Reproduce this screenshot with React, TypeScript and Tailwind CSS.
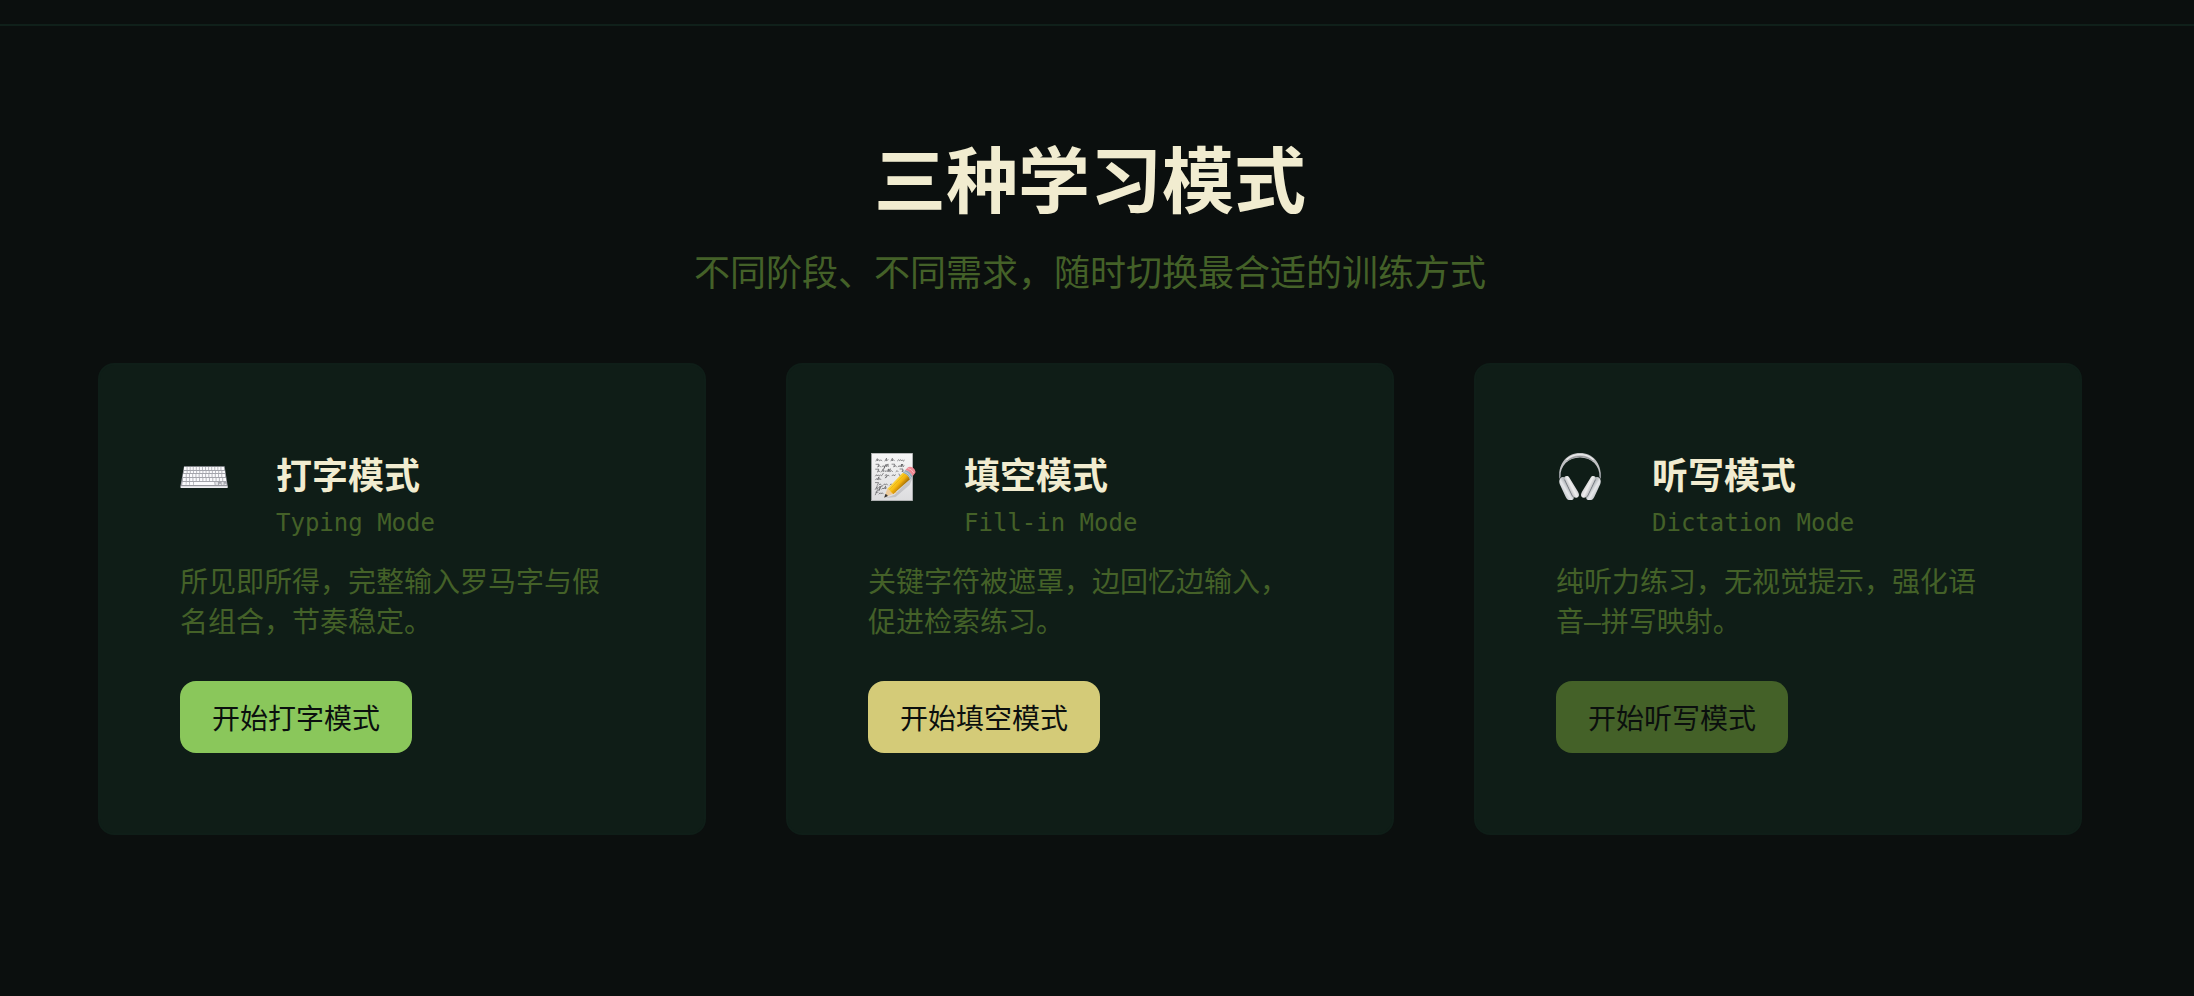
import React from 'react';

const KEY_ROWS = [
  { y: 14, h: 3, x1: 4, x2: 44 },
  { y: 18, h: 2, x1: 4, x2: 45 },
  { y: 21, h: 3, x1: 3, x2: 45 },
  { y: 25, h: 3, x1: 3, x2: 46 },
];

const KeyboardIcon: React.FC = () => (
  <svg className="w-12 h-12" viewBox="0 0 48 48" aria-hidden="true">
    <path d="M4 13.3h40.6l3 18.9v2.2q0 .6-.8.6H1.4q-.8 0-.8-.6v-2.2z" fill="#a4a5ac" />
    {KEY_ROWS.map((row) => (
      <g key={row.y}>
        <rect x={row.x1} y={row.y} width={row.x2 - row.x1} height={row.h} rx="0.5" fill="#fbfbfd" />
        {Array.from({ length: 12 }, (_, i) => {
          const x = row.x1 + ((i + 1) * (row.x2 - row.x1)) / 13;
          return <path key={i} d={`M${x} ${row.y}v${row.h}`} stroke="#a4a5ac" strokeWidth="0.8" />;
        })}
      </g>
    ))}
    <path d="M2.6 29h3.2v3H2.2zM6.5 29h2.7v3H6.2zM10 29h3v3H9.7zM13.8 29h20.5l.4 3H13.6z" fill="#fbfbfd" />
    <path d="M35.2 29h2.7l.2 3h-2.6zM39 30.7h2v1.3h-2zM41.6 29h2v3h-2zM44.3 30.7h2l.2 1.3h-2z" fill="#e2e2e6" />
    <path d="M.7 33.1h46.8v1.3q0 .6-.8.6H1.4q-.7 0-.7-.6z" fill="#ededf0" />
    <path d="M.9 32.7h46.4" stroke="#898a92" strokeWidth="0.7" />
  </svg>
);

const MemoIcon: React.FC = () => (
  <svg className="w-12 h-12" viewBox="0 0 48 48" aria-hidden="true">
    <defs>
      <linearGradient id="paper" x1="0" y1="0" x2="0" y2="1">
        <stop offset="0" stopColor="#f7f7f7" />
        <stop offset="1" stopColor="#dcdcde" />
      </linearGradient>
      <linearGradient id="pencil" gradientUnits="userSpaceOnUse" x1="26" y1="27" x2="34" y2="34">
        <stop offset="0" stopColor="#f9d65b" />
        <stop offset="0.35" stopColor="#fbc91e" />
        <stop offset="0.65" stopColor="#efac0c" />
        <stop offset="1" stopColor="#a97406" />
      </linearGradient>
    </defs>
    <rect x="3.6" y="0.3" width="41" height="47.4" fill="url(#paper)" stroke="#bcbcbe" strokeWidth="0.6" />
    <g fill="none" stroke="#48484c" strokeWidth="0.6" strokeLinecap="round" strokeLinejoin="round">
      <path d="M8 8l1.3-2.4.2 2.3 1.2-1.4.8 1.4 1.4-1 1 .8M17 8l1.5-2.8-.2 2.6 1.8-1M23 7.9l1.4-2.6-.3 2.6 1.2-1.3 1 1.2M29.5 7.8l1.3-1.2.7 1.1 1.2-1 .8 1.2 1.1-1.1.8 1.4 1-1" />
      <path d="M8 11.3h3l-1.3 2.8 1.8-1.5 1 1.3M14 13.8l1.2-1.2.8 1.1 1-1.1-1 3 2.2-4.5.3 2.6 1.5-2.8.2 2.7M24 11.2h2.7l-1 2.8 1.8-1.4.8 1.2M30.2 13.8l1-1.2.8 1.2 1.8-2.8-.5 2.8 1.4-2.7.2 2.7 1.2-1" />
      <path d="M7.6 16.2h3.2l-1.3 2.9 1.5-1.4 1 1.2M13.5 18.8l1.8-3-.3 2.8 1.2-1 .9 1 1.1-1 1 1.1 1.3-2.8.1 2.7 1.7-2.9-.6 3 2-1 .8.8M28 18.6l1.2-1 .8 1M32 16h3l-1 2.8 1.7-1.1" />
      <path d="M7.5 23l1-1.3.8 1.3 1.2-1.2.8 1.2 1.4-1 .8.8 1.8-2.5M17 22.8l1.2-1.4.6 1.3-1.4 2.4 2.8-3.2.8 1M24 22.8l1.2-1.2.8 1.2 1.5-1M31 21l.8 1.8 1.7-1" />
      <path d="M7.6 26.8l1.2-1.3.6 1.2 1.5-2.8-.3 2.8 1.5-1.1.7 1" />
      <path d="M7.4 29.6h3.2l-1.4 2.8M11 32l1.2-1.2.8 1.1M15.6 32l1-1.2.8 1.2 1.2-1.1.8 1M22 32l1.2-1.2.8 1" />
      <path d="M7.3 36.4l1.8-3-.2 2.9 1.4-1.1 2-2.2-1.2 4.6 2-4.3 1.6-.5M13.8 36l1.2-1 .8 1 1.8-2.8-.5 2.7 1.4-1" />
      <path d="M7.3 41.8l2-4.6 1.3-.3M8 39.2h2M11 41l1.2-1.2.7 1 1.4-1 .8 1" />
    </g>
    {/* soft shadow under the pencil */}
    <path d="M17.5 45l9-3.2L44 23.5l.6 1.5-3 7-14 12z" fill="#77777c" opacity="0.28" />
    <path d="M16.2 44.6l3-8.6 3 1.2 2.8 3.8z" fill="#edca99" />
    <path d="M19.2 36l1.8 1 .9 2.2 2.2.2.9 1.6 4-1.5-4.5-5.4z" fill="#f2c98d" />
    <path d="M16.2 44.8l1.2-3.7q1.8.5 2.5 2z" fill="#343438" />
    <path d="M19.2 36L34.8 19.8q4.8 1 7.2 6.4L25 41.2q-.6-2.1-2.2-2-.2-2.4-3.6-3.2z" fill="url(#pencil)" />
    <path d="M21.4 36.8L36.7 21M24.1 39.2L40.3 23.9" stroke="#cf930c" strokeWidth="0.5" opacity="0.7" />
    <path d="M34.8 19.8l2.5-2.7q5.2 1.2 7.3 6.2L42 26.2q-2.1-5.1-7.2-6.4z" fill="#91a8b8" />
    <path d="M36 18.5q5 1.3 7.3 6.4" fill="none" stroke="#d5e1e8" strokeWidth="0.7" />
    <path d="M37.3 17.1l2.2-2.4q2-1.8 4.8-.4 2.6 1.5 3.2 4.1.1 1.2-.7 2.2l-2.2 2.7q-2-5-7.3-6.2z" fill="#ed8792" />
    <path d="M40 15.4q3.7.7 5.5 4.2" fill="none" stroke="#f8b6bc" strokeWidth="1" strokeLinecap="round" />
  </svg>
);

const HeadphonesIcon: React.FC = () => (
  <svg className="w-12 h-12" viewBox="0 0 48 48" aria-hidden="true">
    <defs>
      <linearGradient id="cup" gradientUnits="userSpaceOnUse" x1="5" y1="39" x2="15" y2="33">
        <stop offset="0" stopColor="#b9bcc0" />
        <stop offset="0.45" stopColor="#e6e8ea" />
        <stop offset="1" stopColor="#8e9398" />
      </linearGradient>
      <linearGradient id="pad" gradientUnits="userSpaceOnUse" x1="12" y1="36" x2="20" y2="32">
        <stop offset="0" stopColor="#b2b3b6" />
        <stop offset="0.5" stopColor="#efefef" />
        <stop offset="1" stopColor="#c5c5c7" />
      </linearGradient>
    </defs>
    <path
      d="M3.1 24C2.8 10 11 0 24 0s21.2 10 20.9 24h-1.3C43.8 13 35.8 4.6 24 4.6S4.2 13 4.4 24z"
      fill="#bfc0c2"
    />
    <path d="M10.5 6.8C17.5-.2 30.5-.2 37.5 6.8" fill="none" stroke="#ececed" strokeWidth="1.3" />
    <path d="M11 8.2C18 1.8 30 1.8 37 8.2" fill="none" stroke="#95969a" strokeWidth="1" />
    <path d="M3.7 19.5v6M44.3 19.5v6" stroke="#8e9297" strokeWidth="1.3" />
    <g id="earcup">
      <path d="M4.4 25.2c1.3-1.3 3.7-1.8 5 .1L17.4 43c.8 2 .2 3.8-1.3 4h-3.2c-1.4-.2-2.4-1.3-3.3-3.2L3.9 31.4c-.8-1.8-1.1-4.6.5-6.2z" fill="url(#cup)" />
      <path d="M8.7 26.4l8.1 17.2" stroke="#747a80" strokeWidth="1.2" />
      <path d="M8.3 25c-.2-1.8 3.4-3.2 5-.6l8.7 14.4c1.8 3.1 1 5.6-1.5 5.9-1.9.3-3.3-.7-4.2-2.6z" fill="url(#pad)" />
    </g>
    <use href="#earcup" transform="matrix(-1 0 0 1 48 0)" />
  </svg>
);

const MODES = [
  {
    title: '打字模式',
    subtitle: 'Typing Mode',
    description: '所见即所得，完整输入罗马字与假名组合，节奏稳定。',
    action: '开始打字模式',
    button: 'bg-[#8ac75b]',
    icon: <KeyboardIcon />,
  },
  {
    title: '填空模式',
    subtitle: 'Fill-in Mode',
    description: '关键字符被遮罩，边回忆边输入，促进检索练习。',
    action: '开始填空模式',
    button: 'bg-[#d4cb78]',
    icon: <MemoIcon />,
  },
  {
    title: '听写模式',
    subtitle: 'Dictation Mode',
    description: '纯听力练习，无视觉提示，强化语音–拼写映射。',
    action: '开始听写模式',
    button: 'bg-[#446128]',
    icon: <HeadphonesIcon />,
  },
];

const App: React.FC = () => {
  return (
    <main
      lang="zh-CN"
      className="min-h-screen bg-[#0b0f0e] pt-6 font-['Noto_Sans_CJK_SC',sans-serif]"
    >
      <section className="border-t-2 border-[#10201a] pt-[114px] pb-40 pl-8 pr-[46px]">
        <div className="max-w-[1984px] mx-auto">
          <div className="text-center mb-[67px]">
            <h2 className="text-7xl leading-[72px] font-bold text-[#f1ecd0]">三种学习模式</h2>
            <p className="mt-8 text-4xl leading-[52px] text-[#446128]">
              不同阶段、不同需求，随时切换最合适的训练方式
            </p>
          </div>

          <div className="grid md:grid-cols-3 gap-20">
            {MODES.map((mode) => (
              <article key={mode.title} className="rounded-2xl border-2 border-[#0f1e18] bg-[#0f1d17] p-20">
                <div className="flex items-start gap-12 mb-5">
                  <div className="shrink-0 pt-2">{mode.icon}</div>
                  <div>
                    <h3 className="text-4xl leading-[56px] font-bold text-[#f1ecd0]">{mode.title}</h3>
                    <p className="mt-0.5 text-2xl leading-10 text-[#446128] font-['DejaVu_Sans_Mono',monospace]">
                      {mode.subtitle}
                    </p>
                  </div>
                </div>
                <p className="text-[28px] leading-10 text-[#446128] mb-[38px] font-['DejaVu_Sans_Mono','Noto_Sans_CJK_SC',monospace]">
                  {mode.description}
                </p>
                <button
                  type="button"
                  className={`rounded-2xl px-8 py-4 text-[28px] leading-10 text-[#0b0f0e] ${mode.button}`}
                >
                  {mode.action}
                </button>
              </article>
            ))}
          </div>
        </div>
      </section>
    </main>
  );
};

export default App;
